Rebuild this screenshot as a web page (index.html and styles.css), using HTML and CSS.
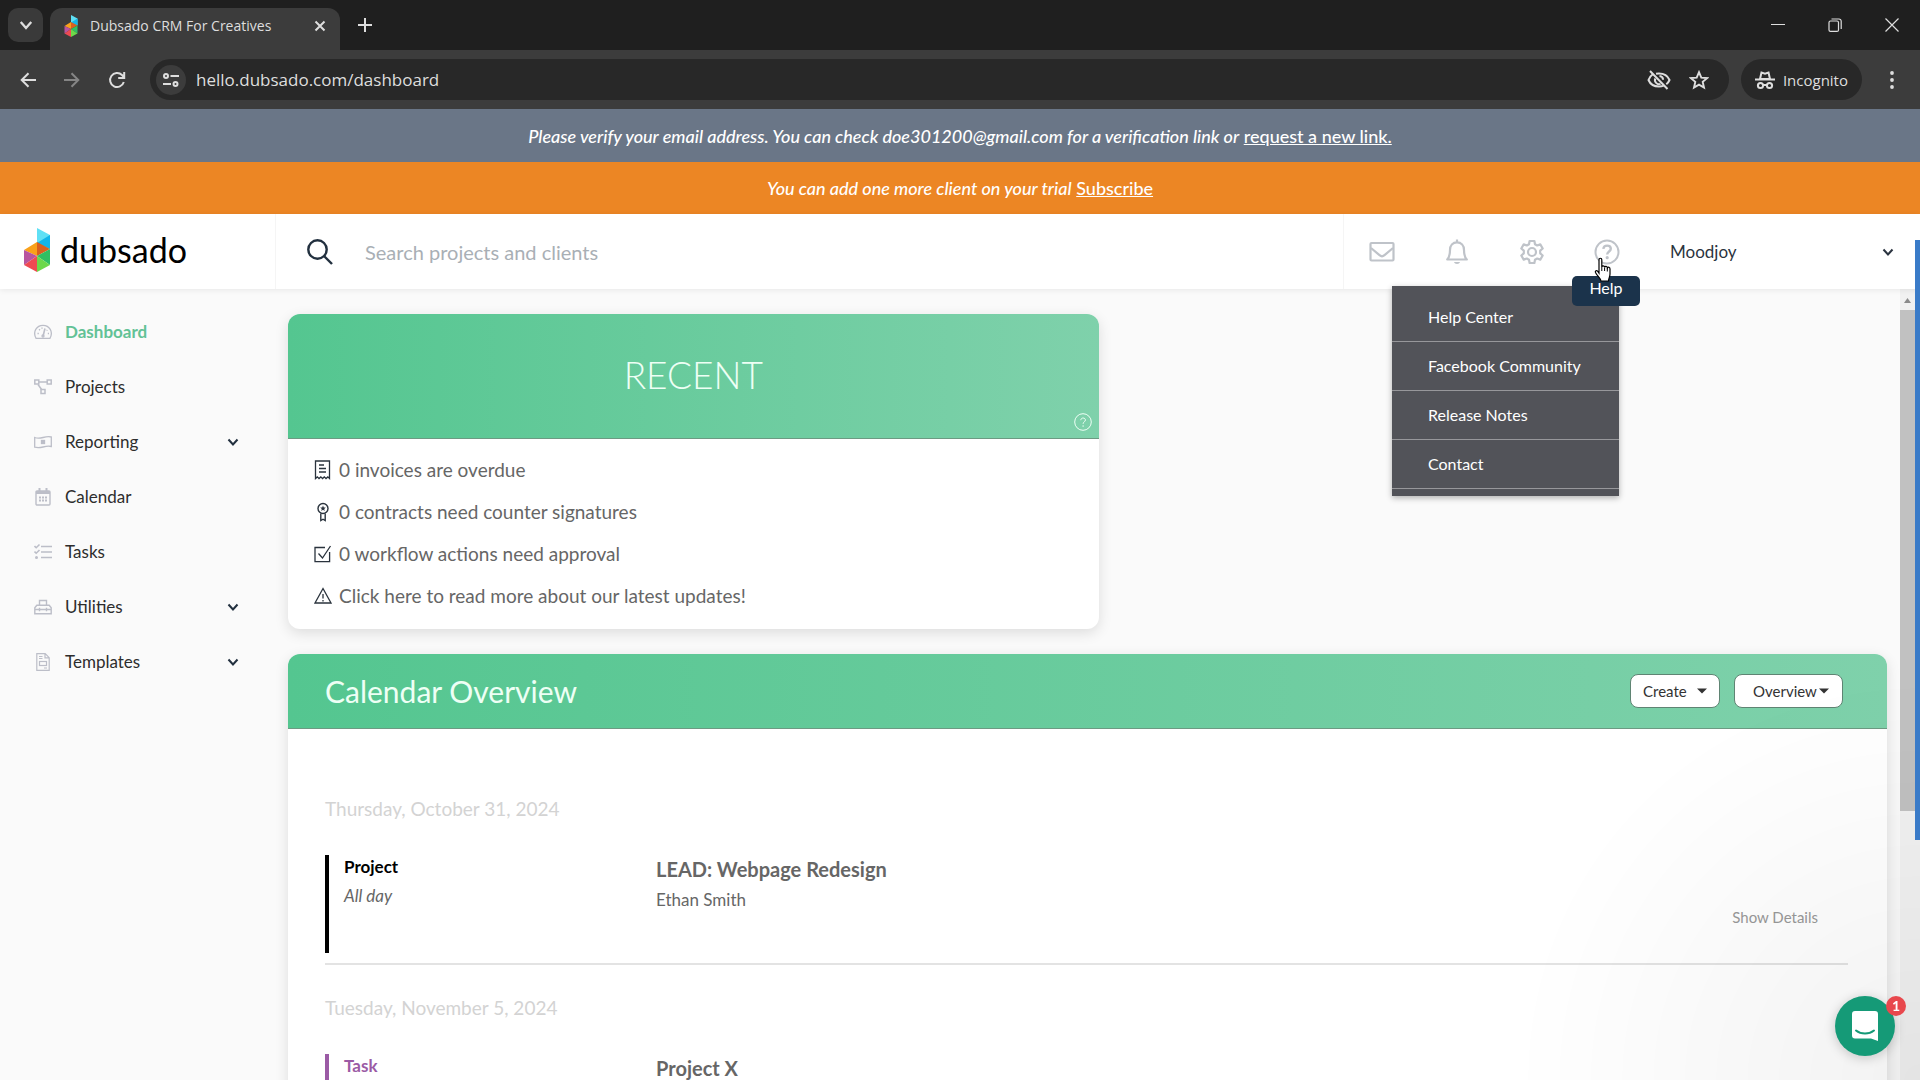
FILE: index.html
```html
<!DOCTYPE html>
<html lang="en">
<head>
    <meta charset="UTF-8">
    <meta name="viewport" content="width=device-width, initial-scale=1.0">
    <title>Dubsado CRM For Creatives</title>
    <link rel="stylesheet" href="styles.css">
</head>
<body>
    <!-- Shared icons -->
    <svg class="sprite" width="0" height="0" aria-hidden="true">
        <symbol id="chevron" viewBox="0 0 12 12">
            <path d="M1.500 3.500 6 8.500 10.500 3.500" fill="none" stroke="currentColor" stroke-width="2"/>
        </symbol>
        <symbol id="caret" viewBox="0 0 10 6">
            <path d="M0 .5h10L5 5.500z" fill="currentColor"/>
        </symbol>
        <symbol id="cube" viewBox="0 0 26 44">
            <path d="M13 0v15l13 6V7z" fill="#5fe0f5"/>
            <path d="M13 15 26 7v14z" fill="#12b5ea"/>
            <path d="M0 22 13 14v14z" fill="#f9a11b"/>
            <path d="M13 14 26 21 13 28z" fill="#d9601f"/>
            <path d="M0 22 13 28 0 37z" fill="#b8559f"/>
            <path d="M0 37 13 28v16z" fill="#ee4a52"/>
            <path d="M13 28 26 21v16z" fill="#2fbf62"/>
            <path d="M13 28 26 37 13 44z" fill="#6cd84a"/>
        </symbol>
        <symbol id="help" viewBox="0 0 26 26">
            <g fill="none" stroke="currentColor" stroke-width="2">
                <circle cx="13" cy="13" r="11.500"/>
                <path d="M9.300 9.800c.3-2.100 1.700-3.200 3.800-3.200 2.200 0 3.700 1.300 3.700 3.200 0 2.800-3.600 2.700-3.600 5.700" stroke-width="2.400"/>
            </g>
            <circle cx="13.200" cy="18.700" r="1.600" fill="currentColor"/>
        </symbol>
    </svg>

    <!-- Browser window -->
    <div class="tab-strip">
        <button class="tab-search" aria-label="Search tabs"><svg width="14" height="14"><use href="#chevron"/></svg></button>
        <div class="tab">
            <svg width="14" height="22"><use href="#cube"/></svg>
            <span class="tab-title">Dubsado CRM For Creatives</span>
            <button class="plain" aria-label="Close tab">
                <svg width="12" height="12" viewBox="0 0 12 12" stroke="currentColor" stroke-width="2"><path d="M1.500 1.500l9 9M10.500 1.500l-9 9"/></svg>
            </button>
        </div>
        <button class="plain new-tab" aria-label="New tab">
            <svg width="14" height="14" viewBox="0 0 14 14" stroke="currentColor" stroke-width="2"><path d="M7 0v14M0 7h14"/></svg>
        </button>
        <div class="window-buttons">
            <button class="plain" aria-label="Minimize"><svg width="14" height="14" viewBox="0 0 14 14" stroke="currentColor"><path d="M0 6.500h14"/></svg></button>
            <button class="plain" aria-label="Restore"><svg width="14" height="14" viewBox="0 0 14 14" fill="none" stroke="currentColor" stroke-width="1.200"><rect x="1" y="3" width="9.500" height="10.400" rx="1.500"/><path d="M3.500 1h7.500a2.200 2.200 0 0 1 2.200 2.200V11"/></svg></button>
            <button class="plain" aria-label="Close"><svg width="14" height="14" viewBox="0 0 14 14" stroke="currentColor" stroke-width="1.200"><path d="M.5.500l13 13M13.500.500l-13 13"/></svg></button>
        </div>
    </div>
    <div class="toolbar">
        <button class="plain" aria-label="Back"><svg width="16" height="16" viewBox="0 0 16 16" fill="none" stroke="currentColor" stroke-width="2"><path d="M16 8H2M8.500 1.200 1.700 8l6.800 6.800"/></svg></button>
        <button class="plain dim" aria-label="Forward"><svg width="16" height="16" viewBox="0 0 16 16" fill="none" stroke="currentColor" stroke-width="2"><path d="M0 8h14M7.500 1.200 14.300 8l-6.800 6.800"/></svg></button>
        <button class="plain" aria-label="Reload"><svg width="18" height="18" viewBox="0 0 18 18" fill="none" stroke="currentColor" stroke-width="2"><path d="M15.800 11A7 7 0 1 1 14 4l2 2.400M16.200 1v6h-6"/></svg></button>
        <div class="omnibox">
            <button class="site-info" aria-label="Site information">
                <svg width="16" height="14" viewBox="0 0 16 14" fill="none" stroke="currentColor" stroke-width="2"><circle cx="3" cy="3" r="2"/><path d="M7.500 3H16M0 11h8"/><circle cx="12.500" cy="11" r="2"/></svg>
            </button>
            <input class="url" type="text" aria-label="Address" value="hello.dubsado.com/dashboard">
            <button class="plain" aria-label="Third-party cookies blocked">
                <svg width="24" height="20" viewBox="0 0 24 20" fill="none" stroke="currentColor" stroke-width="2"><path d="M5.500 4.500C3.600 5.800 2.200 7.700 1.500 10c1.700 4 5.600 6.500 10.500 6.500 1.700 0 3.300-.3 4.600-.9M9 3.800c1-.2 2-.3 3-.3 4.900 0 8.800 2.500 10.500 6.500-.7 1.700-1.800 3.200-3.200 4.300M3 1l17.500 18"/><path d="M8.300 8.500a4 4 0 0 0 5.200 5.300M12.500 6a4 4 0 0 1 3.600 3.800"/></svg>
            </button>
            <button class="plain" aria-label="Bookmark this tab">
                <svg width="20" height="20" viewBox="0 0 20 20" fill="none" stroke="currentColor" stroke-width="1.900"><path d="M10 2.200l2.300 5.400 5.800.5-4.400 3.800 1.300 5.700-5-3-5 3 1.300-5.700L1.900 8.100l5.800-.5z"/></svg>
            </button>
        </div>
        <button class="incognito">
            <svg width="20" height="20" viewBox="0 0 20 20" fill="none" stroke="currentColor" stroke-width="2"><path d="M5 9 6.500 2.500 10 3.600l3.500-1.100L15 9z" /><path d="M0 9.500h20"/><circle cx="5.500" cy="15.500" r="2.600"/><circle cx="14.500" cy="15.500" r="2.600"/><path d="M8 15h4"/></svg>
            Incognito
        </button>
        <button class="plain" aria-label="Menu"><svg width="4" height="18" viewBox="0 0 4 18" fill="currentColor"><circle cx="2" cy="2" r="1.900"/><circle cx="2" cy="9" r="1.900"/><circle cx="2" cy="16" r="1.900"/></svg></button>
    </div>

    <!-- Notices -->
    <div class="notice notice-verify"><em>Please verify your email address. You can check doe301200@gmail.com for a verification link or</em>&nbsp;<a href="#">request a new link.</a></div>
    <div class="notice notice-trial"><em>You can add one more client on your trial</em>&nbsp;<a href="#">Subscribe</a></div>

    <div class="app">
        <header class="header">
            <a class="logo" href="#">
                <svg width="26" height="44"><use href="#cube"/></svg>
                <span>dubsado</span>
            </a>
            <form class="search" role="search">
                <svg width="26" height="26" viewBox="0 0 26 26" fill="none" stroke="currentColor" stroke-width="2.400"><circle cx="10.500" cy="10.500" r="9.200"/><path d="M17 17l8 8"/></svg>
                <input type="text" aria-label="Search" placeholder="Search projects and clients">
            </form>
            <nav class="actions">
                <button class="action" aria-label="Mail">
                    <svg width="26" height="26" viewBox="0 0 26 26" fill="none" stroke="currentColor" stroke-width="2.200"><rect x="1.500" y="4" width="23" height="17.500" rx="1"/><path d="M2 9l8.500 7.200c1.500 1.300 3.500 1.300 5 0L24 9"/></svg>
                </button>
                <button class="action" aria-label="Notifications">
                    <svg width="26" height="26" viewBox="0 0 26 26" fill="none" stroke="currentColor" stroke-width="2.200" stroke-linejoin="round"><path d="M13 .5V3M3.200 20.500c2-2 2.800-4 2.800-9.500 0-4.500 2.800-7.600 7-7.600s7 3.100 7 7.600c0 5.500.8 7.500 2.800 9.500z"/><path d="M10 23c.5 2.600 5.500 2.600 6 0z" fill="currentColor" stroke="none"/></svg>
                </button>
                <button class="action" aria-label="Settings">
                    <svg width="26" height="26" viewBox="0 0 26 26" fill="none" stroke="currentColor" stroke-width="2.200" stroke-linejoin="round"><path d="M10.600 2h4.800l.6 3.200 2.200 1.300 3.100-1.100 2.400 4.100-2.500 2.200v2.600l2.500 2.200-2.400 4.100-3.100-1.100-2.200 1.300-.6 3.200h-4.800l-.6-3.200-2.200-1.300-3.100 1.100-2.400-4.100 2.500-2.200v-2.600L2.300 9.500l2.400-4.100 3.100 1.100L10 5.200z"/><circle cx="13" cy="13" r="4"/></svg>
                </button>
                <div class="help-wrap">
                    <button class="action" aria-label="Help" aria-haspopup="true"><svg width="26" height="26"><use href="#help"/></svg></button>
                    <ul class="help-menu">
                        <li><a href="#">Help Center</a></li>
                        <li><a href="#">Facebook Community</a></li>
                        <li><a href="#">Release Notes</a></li>
                        <li><a href="#">Contact</a></li>
                    </ul>
                    <span class="tooltip">Help</span>
                    <svg class="pointer" width="18" height="26" viewBox="0 0 18 26"><path d="M5 14V2.800C5 .7 7.800.7 7.800 2.800V10c.3-1.700 2.600-1.500 2.800.3.500-1.500 2.600-1.200 2.800.6.700-1.300 2.600-.8 2.600 1V17c0 3-1.500 4.200-1.500 7H7c-.5-3-4-5.200-5.500-8.500C.8 13.800 2.600 13 3.800 14.300L5 16z" fill="#fff" stroke="#000" stroke-width="1.200"/><path d="M7.800 10v4M10.600 10.500V14M13.300 11v3.500" stroke="#000"/></svg>
                </div>
            </nav>
            <button class="account">Moodjoy <svg width="12" height="12"><use href="#chevron"/></svg></button>
        </header>

        <div class="columns">
            <nav class="sidebar">
                <a class="active" href="#">
                    <svg width="18" height="18" viewBox="0 0 18 18" fill="none" stroke="currentColor" stroke-width="1.300"><path d="M2 15.300C-1.500 9 2.500 2.300 9 2.300s10.500 6.700 7 13z"/><path d="M9.200 12.500 11 5.500" stroke-width="1.600"/><circle cx="9" cy="13" r="1"/><path d="M3.500 10.500h1.300M5 6.200l1 1M8 4.500v1.300M13.300 7l-.6.700M13.800 10.500h1.200"/></svg>
                    <span>Dashboard</span>
                </a>
                <a href="#">
                    <svg width="18" height="18" viewBox="0 0 18 18" fill="none" stroke="currentColor" stroke-width="1.500"><rect x=".8" y="2" width="4" height="4"/><rect x="13.200" y="2" width="4" height="4"/><rect x="7" y="11.500" width="4" height="4"/><path d="M5 4h8M4 6.500l3.600 5"/></svg>
                    <span>Projects</span>
                </a>
                <a href="#">
                    <svg width="18" height="18" viewBox="0 0 18 18" fill="none" stroke="currentColor" stroke-width="1.300"><path d="M.7 4.500c3 1 5.500.7 8.300 0s5.300-1.300 8.300-.5v9.500c-3-.8-5.500-.2-8.300.5s-5.300 1-8.300.2z"/><rect x="7.500" y="7.500" width="3" height="3" fill="currentColor"/></svg>
                    <span>Reporting</span><svg class="chev" width="12" height="12"><use href="#chevron"/></svg>
                </a>
                <a href="#">
                    <svg width="18" height="18" viewBox="0 0 18 18" fill="none" stroke="currentColor" stroke-width="1.400"><rect x="2" y="3" width="14" height="14" rx="1"/><path d="M2 4.500h14" stroke-width="3"/><path d="M5.500 0v3M12.500 0v3" stroke-width="2"/><path d="M5 9.500h8M5 12.500h8" stroke-width="2" stroke-dasharray="2 1"/></svg>
                    <span>Calendar</span>
                </a>
                <a href="#">
                    <svg width="18" height="18" viewBox="0 0 18 18" fill="none" stroke="currentColor" stroke-width="1.600"><path d="M7 3.500h11M7 9h11M7 14.500h11M.5 3l1.700 1.700L5.500 1.500M.5 8.500l1.700 1.700L5.500 7"/><circle cx="2.500" cy="14.500" r="1.500" fill="currentColor" stroke="none"/></svg>
                    <span>Tasks</span>
                </a>
                <a href="#">
                    <svg width="18" height="18" viewBox="0 0 18 18" fill="none" stroke="currentColor" stroke-width="1.400"><path d="M.8 15.800v-6l2-2.500h12.400l2 2.500v6zM.8 11.500h16.400M5.500 9.800v3.400M12.500 9.800v3.400M5.500 7V2.500h7V7"/></svg>
                    <span>Utilities</span><svg class="chev" width="12" height="12"><use href="#chevron"/></svg>
                </a>
                <a href="#">
                    <svg width="18" height="18" viewBox="0 0 18 18" fill="none" stroke="currentColor" stroke-width="1.200"><path d="M2.800.7h8.400l4 4v12.600H2.800zM11 .7v4.200h4.200M5 3.500h3.500M5 5.500h3.500M10 15h3"/><rect x="5.500" y="8.500" width="7" height="4"/></svg>
                    <span>Templates</span><svg class="chev" width="12" height="12"><use href="#chevron"/></svg>
                </a>
            </nav>

            <main class="content">
                <section class="card recent">
                    <div class="recent-head">
                        <h2>RECENT</h2>
                        <button class="recent-help" aria-label="About recent">
                            <svg width="18" height="18" viewBox="0 0 18 18" fill="none" stroke="currentColor"><circle cx="9" cy="9" r="8.300"/><path d="M6.800 7.200c0-3 4.600-2.800 4.600-.2 0 1.800-2.300 1.900-2.300 3.800M9.100 12.300v1.500"/></svg>
                        </button>
                    </div>
                    <ul class="recent-list">
                        <li><a href="#">
                            <svg width="18" height="20" viewBox="0 0 18 20" fill="none" stroke="currentColor" stroke-width="1.300"><path d="M1.500 18.500V1h14v17.500l-1.700-1.600-1.800 1.600-1.700-1.600-1.800 1.600-1.700-1.600L5 18.500l-1.700-1.600zM5 5h5M5 8.500h7M5 12h7"/></svg>
                            0 invoices are overdue</a></li>
                        <li><a href="#">
                            <svg width="18" height="20" viewBox="0 0 18 20" fill="none" stroke="currentColor" stroke-width="1.400"><circle cx="9" cy="6.500" r="5"/><path d="M6.800 11.500V18.500l2.200-1.300 2.200 1.300v-7"/><path d="M9 3.500l.8 2 2 .1-1.600 1.300.6 2L9 7.800 7.200 8.900l.6-2-1.600-1.300 2-.1z" fill="currentColor" stroke="none"/></svg>
                            0 contracts need counter signatures</a></li>
                        <li><a href="#">
                            <svg width="18" height="20" viewBox="0 0 18 20" fill="none" stroke="currentColor" stroke-width="1.300"><path d="M11 3.500H1v14.200h14.600V8M4.500 9.500l4 4.500L16.500 2"/></svg>
                            0 workflow actions need approval</a></li>
                        <li><a href="#">
                            <svg width="18" height="20" viewBox="0 0 18 20" fill="none" stroke="currentColor" stroke-width="1.300"><path d="M9 2.500 17 17H1zM9 8v4.500M9 14v1.500"/></svg>
                            Click here to read more about our latest updates!</a></li>
                    </ul>
                </section>

                <section class="card calendar">
                    <div class="calendar-head">
                        <h2>Calendar Overview</h2>
                        <button class="pick pick-create" aria-haspopup="true">Create <svg width="10" height="6"><use href="#caret"/></svg></button>
                        <button class="pick pick-view" aria-haspopup="true">Overview <svg width="10" height="6"><use href="#caret"/></svg></button>
                    </div>
                    <div class="calendar-body">
                        <h3>Thursday, October 31, 2024</h3>
                        <div class="event">
                            <div class="event-type">
                                <b>Project</b>
                                <i>All day</i>
                            </div>
                            <div class="event-info">
                                <h4>LEAD: Webpage Redesign</h4>
                                <p>Ethan Smith</p>
                            </div>
                            <a class="event-more" href="#">Show Details</a>
                        </div>
                        <h3>Tuesday, November 5, 2024</h3>
                        <div class="event event-task">
                            <div class="event-type">
                                <b>Task</b>
                            </div>
                            <div class="event-info">
                                <h4>Project X</h4>
                            </div>
                        </div>
                    </div>
                </section>
            </main>

            <div class="scrollbar">
                <svg width="15" height="21" viewBox="0 0 15 21"><path d="M4 14l3.500-5L11 14z" fill="#8b8b8b"/></svg>
                <div class="thumb"></div>
            </div>
        </div>
        <div class="edge"></div>
    </div>

    <div class="chat-shade"></div>
    <button class="chat" aria-label="Open chat">
        <svg width="28" height="32" viewBox="0 0 28 32"><path d="M4 1h20a3 3 0 0 1 3 3v27l-7-2.500H4a3 3 0 0 1-3-3V4a3 3 0 0 1 3-3z" fill="#fff"/><path d="M5 20.500c5 4 13 4 18 0" fill="none" stroke="#159a77" stroke-width="2" stroke-linecap="round"/></svg>
        <span class="badge">1</span>
    </button>
</body>
</html>
```
FILE: styles.css
```css
* {
    box-sizing: border-box;
}

body {
    margin: 0;
    height: 100vh;
    overflow: hidden;
    display: flex;
    flex-direction: column;
    font-family: Lato, "Open Sans", sans-serif;
    font-size: 17px;
    line-height: 24px;
    color: #333;
    background: #fafafa;
}

h2, h3, h4, p, ul {
    margin: 0;
    padding: 0;
    font-weight: normal;
}

ul {
    list-style: none;
}

button, input {
    font: inherit;
    color: inherit;
    border: 0;
    padding: 0;
    background: none;
    outline: none;
}

a {
    color: inherit;
    text-decoration: none;
}

svg {
    display: block;
    flex: none;
}

.sprite {
    position: absolute;
}

/* Browser window */
.tab-strip, .toolbar {
    display: flex;
    align-items: center;
    flex: none;
    font-family: "Open Sans", "Noto Sans", sans-serif;
    color: #dedede;
}

.tab-strip {
    height: 50px;
    padding-left: 8px;
    background: #1f1f1f;
    font-size: 14px;
}

.plain {
    display: flex;
    align-items: center;
    justify-content: center;
}

.tab-search {
    display: flex;
    align-items: center;
    justify-content: center;
    width: 35px;
    height: 34px;
    border-radius: 10px;
    background: #3a3a3a;
}

.tab {
    display: flex;
    align-items: center;
    align-self: flex-end;
    gap: 12px;
    width: 290px;
    height: 42px;
    margin-left: 7px;
    padding: 0 14px 7px;
    border-radius: 12px 12px 0 0;
    background: #3c3c3c;
}

.tab-title {
    flex: 1;
}

.new-tab {
    margin-left: 18px;
}

.window-buttons {
    display: flex;
    margin-left: auto;
}

.window-buttons .plain {
    width: 57px;
    height: 40px;
}

.toolbar {
    height: 59px;
    padding: 0 26px 0 20px;
    gap: 28px;
    background: #3c3c3c;
}

.dim {
    color: #858585;
}

.omnibox {
    display: flex;
    align-items: center;
    flex: 1;
    gap: 18px;
    height: 41px;
    margin-left: -4px;
    padding: 0 20px 0 6px;
    border-radius: 21px;
    background: #282828;
    font-size: 17px;
}

.site-info {
    display: flex;
    align-items: center;
    justify-content: center;
    width: 30px;
    height: 30px;
    border-radius: 50%;
    background: #3c3c3c;
}

.url {
    flex: 1;
    margin-left: -8px;
}

.incognito {
    display: flex;
    align-items: center;
    gap: 8px;
    height: 41px;
    margin-left: -16px;
    padding: 0 14px;
    border-radius: 21px;
    background: #282828;
    font-size: 15px;
}

/* Notices */
.notice {
    display: flex;
    align-items: center;
    justify-content: center;
    flex: none;
    height: 52px;
    color: #fff;
    font-size: 18px;
    font-weight: 500;
}

.notice a {
    text-decoration: underline;
}

.notice-verify {
    height: 53px;
    background: #6a7687;
}

.notice-trial {
    background: #ec8624;
}

/* App */
.app {
    position: relative;
    flex: 1;
    min-height: 0;
    display: flex;
    flex-direction: column;
}

.header {
    position: relative;
    z-index: 2;
    display: flex;
    flex: none;
    height: 75px;
    background: #fff;
    box-shadow: 0 1px 6px rgba(0, 0, 0, .08);
}

.logo {
    display: flex;
    align-items: center;
    gap: 10px;
    width: 276px;
    padding: 0 0 4px 24px;
    border-right: 1px solid #f5f5f5;
    color: #000;
    font-size: 34px;
}

.search {
    display: flex;
    align-items: center;
    flex: 1;
    gap: 32px;
    padding-left: 31px;
    color: #22303f;
}

.search input {
    flex: 1;
    font-size: 20px;
}

.search input::placeholder {
    color: #a9afb5;
}

.actions {
    display: flex;
    border-left: 1px solid #f5f5f5;
    color: #bfc3c9;
}

.action {
    display: flex;
    align-items: center;
    justify-content: center;
    width: 75px;
    height: 75px;
}

.help-wrap {
    position: relative;
}

.help-menu {
    position: absolute;
    top: 72px;
    right: 25px;
    width: 227px;
    padding: 7px 0;
    background: #525359;
    box-shadow: 0 2px 6px rgba(0, 0, 0, .3);
    color: #fff;
    font-size: 16px;
}

.help-menu a {
    display: block;
    height: 49px;
    padding: 12px 36px;
    border-bottom: 1px solid #97979b;
    white-space: nowrap;
}

.tooltip {
    position: absolute;
    top: 62px;
    left: 3px;
    width: 68px;
    height: 30px;
    border-radius: 5px;
    background: #1b334b;
    color: #fff;
    font-size: 16px;
    text-align: center;
}

.pointer {
    position: absolute;
    top: 43px;
    left: 25px;
}

.account {
    display: flex;
    align-items: center;
    justify-content: space-between;
    width: 276px;
    padding: 0 26px;
    color: #2b3440;
}

.columns {
    flex: 1;
    min-height: 0;
    display: flex;
    overflow: hidden;
}

.sidebar {
    width: 275px;
    flex: none;
    padding-top: 15px;
}

.sidebar a {
    display: flex;
    align-items: center;
    gap: 13px;
    height: 55px;
    padding: 0 36px 0 34px;
    color: #2d2d2d;
}

.sidebar svg {
    color: #bcbec8;
}

.sidebar .chev {
    margin-left: auto;
    color: #22303f;
}

.sidebar .active {
    color: #62c296;
    font-weight: bold;
}

.content {
    flex: 1;
    padding: 25px 13px 0;
}

.card {
    border-radius: 12px;
    background: #fff;
    box-shadow: 0 4px 14px rgba(0, 0, 0, .12);
}

.recent {
    width: calc(50% + 11px);
    margin-bottom: 25px;
}

.recent-head, .calendar-head {
    border-bottom: 1px solid #6d9a83;
    border-radius: 12px 12px 0 0;
    background: linear-gradient(90deg, #54c690, #7fd1ab);
    color: #eefff5;
}

.recent-head {
    position: relative;
    height: 125px;
    padding-top: 37px;
    text-align: center;
}

.recent-head h2 {
    font-size: 37px;
    font-weight: 300;
    line-height: 48px;
}

.recent-help {
    position: absolute;
    right: 7px;
    bottom: 7px;
}

.recent-list {
    padding: 10px 26px 12px;
    color: #666;
    font-size: 19px;
}

.recent-list a {
    display: flex;
    align-items: center;
    gap: 7px;
    height: 42px;
}

.recent-list svg {
    color: #2a333d;
}

.calendar {
    height: 600px;
}

.calendar-head {
    display: flex;
    align-items: center;
    gap: 14px;
    height: 75px;
    padding: 0 44px 0 37px;
}

.calendar-head h2 {
    flex: 1;
    font-size: 30px;
}

.pick {
    display: flex;
    align-items: center;
    justify-content: space-between;
    height: 34px;
    border: 1px solid #5f8473;
    border-radius: 8px;
    background: #fff;
    color: #333;
    font-size: 15px;
}

.pick-create {
    width: 90px;
    padding: 0 12px;
}

.pick-view {
    width: 109px;
    padding: 0 13px 0 18px;
}

.calendar-body {
    padding: 68px 39px 0 37px;
}

.calendar-body h3 {
    margin-bottom: 34px;
    color: #d3d3d3;
    font-size: 19px;
}

.event {
    display: grid;
    grid-template-columns: 331px 1fr auto;
    margin-bottom: 31px;
    padding-bottom: 10px;
    border-bottom: 2px solid #e3e3e3;
    color: #666;
}

.event-type {
    display: flex;
    flex-direction: column;
    gap: 5px;
    height: 98px;
    padding-left: 15px;
    border-left: 4px solid #000;
}

.event-type b {
    color: #000;
}

.event-task .event-type {
    border-color: #9b5ba5;
}

.event-task b {
    color: #9b5ba5;
}

.event-info h4 {
    margin-bottom: 5px;
    font-size: 20px;
    font-weight: bold;
    line-height: 28px;
}

.event-more {
    margin: 50px 30px 0 0;
    color: #999;
    font-size: 15px;
}

.scrollbar {
    width: 20px;
    background: #f1f1f1;
}

.thumb {
    width: 15px;
    height: 501px;
    background: #c1c1c1;
}

.edge {
    position: absolute;
    top: 26px;
    right: 0;
    z-index: 3;
    width: 5px;
    height: 600px;
    background: #3a7bc8;
}

/* Chat launcher */
.chat-shade {
    position: fixed;
    right: 0;
    bottom: 0;
    width: 400px;
    height: 400px;
    background: radial-gradient(ellipse at bottom right, rgba(0, 0, 0, .05), rgba(0, 0, 0, 0) 72%);
    pointer-events: none;
}

.chat {
    position: fixed;
    right: 25px;
    bottom: 24px;
    display: flex;
    align-items: center;
    justify-content: center;
    width: 60px;
    height: 60px;
    border-radius: 50%;
    background: #159a77;
    box-shadow: 0 2px 12px rgba(0, 0, 0, .2);
}

.badge {
    position: absolute;
    top: 0;
    right: -11px;
    width: 20px;
    height: 20px;
    border-radius: 50%;
    background: #e8484d;
    color: #fff;
    font-size: 14px;
    font-weight: bold;
    line-height: 20px;
}
```
